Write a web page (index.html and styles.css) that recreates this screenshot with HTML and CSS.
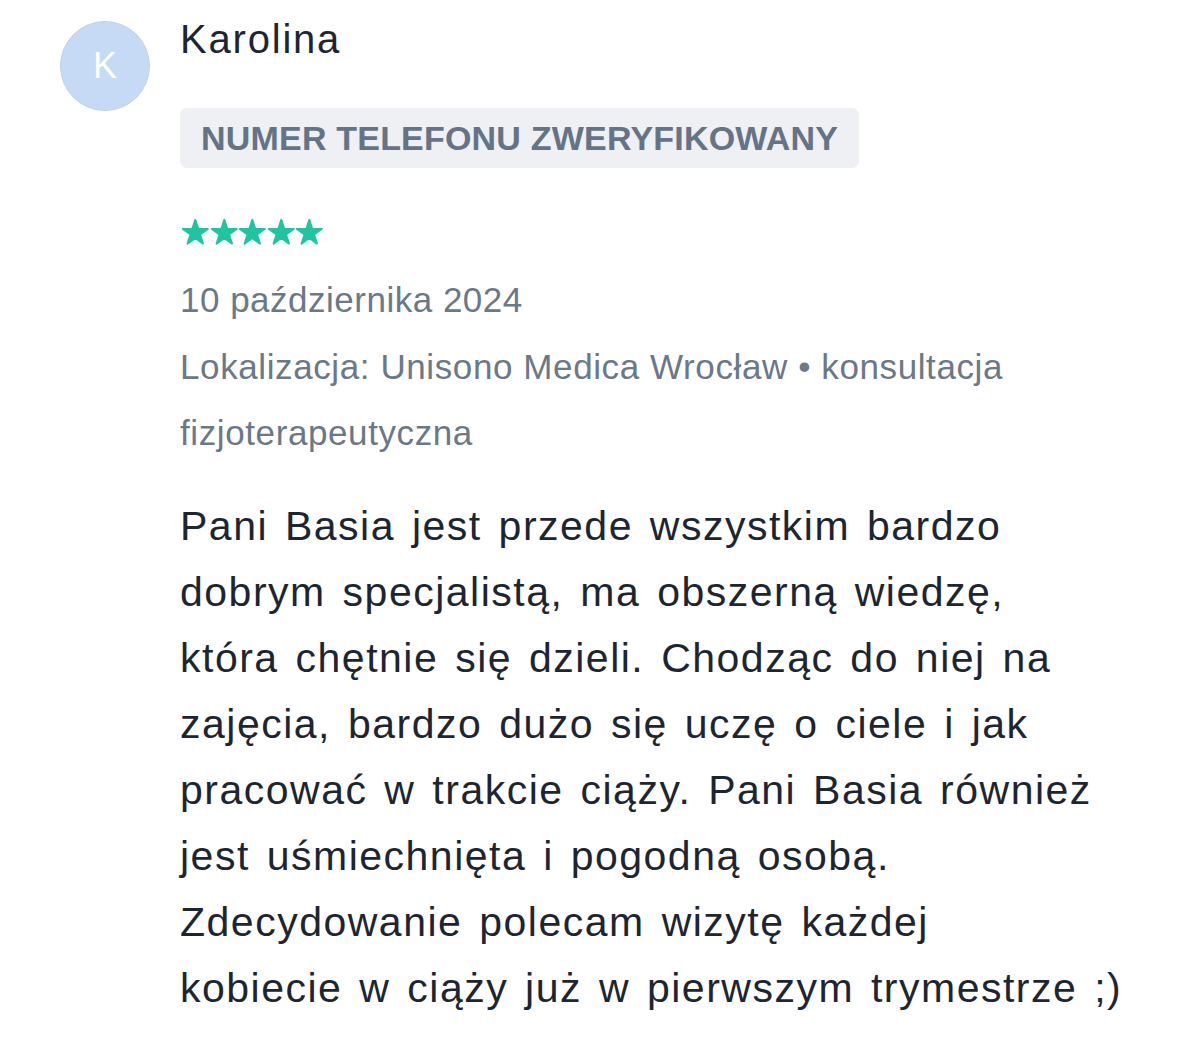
FILE: index.html
```html
<!DOCTYPE html>
<html lang="pl">
<head>
<meta charset="utf-8">
<link rel="stylesheet" href="styles.css">
</head>
<body>
<div class="review">
  <div class="avatar">K</div>
  <div class="content">
    <div class="name">Karolina</div>
    <div class="badge">NUMER TELEFONU ZWERYFIKOWANY</div>
    <div class="stars">
      <svg viewBox="0 0 29 27"><polygon points="14.5,1.7 17.49,10.89 27.15,10.89 19.33,16.57 22.32,25.76 14.5,20.08 6.68,25.76 9.67,16.57 1.85,10.89 11.51,10.89"/></svg>
      <svg viewBox="0 0 29 27"><polygon points="14.5,1.7 17.49,10.89 27.15,10.89 19.33,16.57 22.32,25.76 14.5,20.08 6.68,25.76 9.67,16.57 1.85,10.89 11.51,10.89"/></svg>
      <svg viewBox="0 0 29 27"><polygon points="14.5,1.7 17.49,10.89 27.15,10.89 19.33,16.57 22.32,25.76 14.5,20.08 6.68,25.76 9.67,16.57 1.85,10.89 11.51,10.89"/></svg>
      <svg viewBox="0 0 29 27"><polygon points="14.5,1.7 17.49,10.89 27.15,10.89 19.33,16.57 22.32,25.76 14.5,20.08 6.68,25.76 9.67,16.57 1.85,10.89 11.51,10.89"/></svg>
      <svg viewBox="0 0 29 27"><polygon points="14.5,1.7 17.49,10.89 27.15,10.89 19.33,16.57 22.32,25.76 14.5,20.08 6.68,25.76 9.67,16.57 1.85,10.89 11.51,10.89"/></svg>
    </div>
    <div class="date">10 października 2024</div>
    <div class="meta">Lokalizacja: Unisono Medica Wrocław • konsultacja<br>fizjoterapeutyczna</div>
    <p class="text">Pani Basia jest przede wszystkim bardzo<br>dobrym specjalistą, ma obszerną wiedzę,<br>która chętnie się dzieli. Chodząc do niej na<br>zajęcia, bardzo dużo się uczę o ciele i jak<br>pracować w trakcie ciąży. Pani Basia również<br>jest uśmiechnięta i pogodną osobą.<br>Zdecydowanie polecam wizytę każdej<br>kobiecie w ciąży już w pierwszym trymestrze ;)</p>
  </div>
</div>
</body>
</html>
```
FILE: styles.css
```css
html, body {
  margin: 0;
  padding: 0;
  background: #ffffff;
}
body {
  font-family: "Liberation Sans", Arial, sans-serif;
}
.review {
  display: flex;
  align-items: flex-start;
  padding: 15px 0 0 60px;
  gap: 30px;
}
.avatar {
  flex: 0 0 auto;
  width: 88px;
  height: 88px;
  margin-top: 6px;
  border-radius: 50%;
  background: #c6daf5;
  border: 1px solid #bcd2ef;
  color: #ffffff;
  font-size: 36px;
  display: flex;
  align-items: center;
  justify-content: center;
}
.content {
  display: flex;
  flex-direction: column;
  align-items: flex-start;
}
.name {
  font-size: 40px;
  line-height: 48px;
  color: #1d2630;
  letter-spacing: 1.8px;
}
.badge {
  margin-top: 45px;
  height: 60px;
  padding: 0 21px;
  display: flex;
  align-items: center;
  background: #eef0f3;
  border-radius: 7px;
  color: #647486;
  font-weight: bold;
  font-size: 34px;
  letter-spacing: 0.2px;
}
.stars {
  margin-top: 50px;
  display: flex;
  gap: 0;
  margin-left: 1px;
}
.stars svg {
  width: 28.6px;
  height: 27px;
  fill: #1ec5a0;
  stroke: #1ec5a0;
  stroke-width: 2;
  stroke-linejoin: round;
}
.date {
  margin-top: 35px;
  font-size: 35px;
  line-height: 40px;
  color: #6a7888;
  letter-spacing: 0.5px;
}
.meta {
  margin-top: 14px;
  font-size: 35px;
  line-height: 66px;
  color: #6a7888;
  letter-spacing: 0.6px;
}
.text {
  margin: 27px 0 0;
  font-size: 41px;
  line-height: 66px;
  color: #1d2630;
  letter-spacing: 1.5px;
  word-spacing: 4px;
  white-space: nowrap;
}
```
